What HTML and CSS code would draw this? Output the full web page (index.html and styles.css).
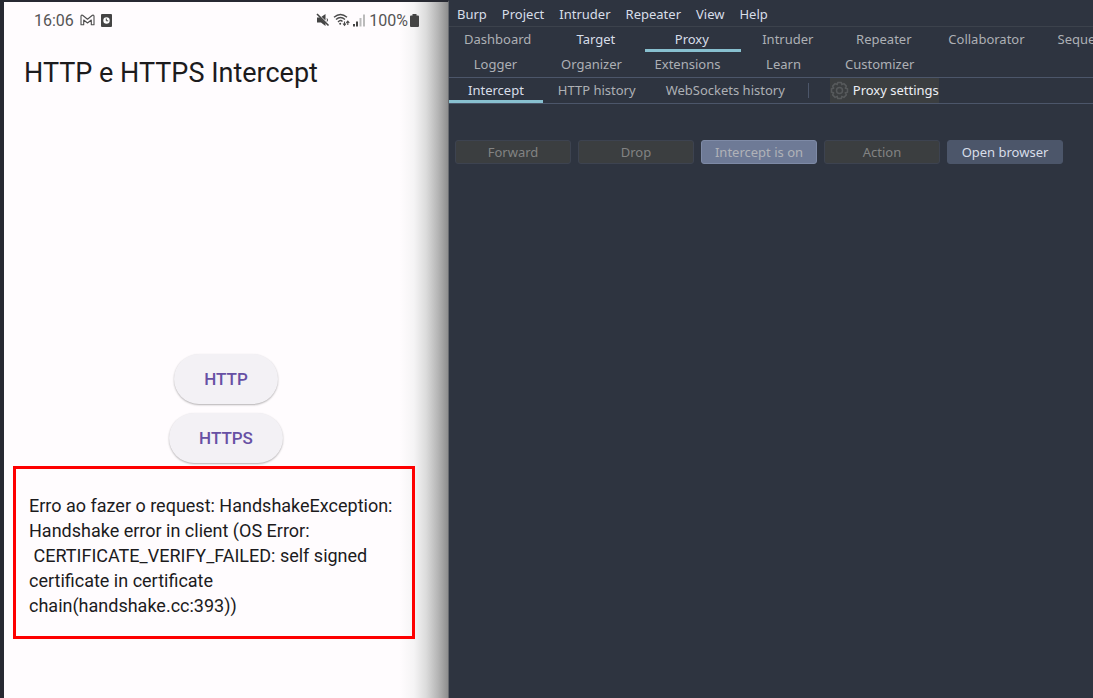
FILE: index.html
```html
<!DOCTYPE html>
<html lang="en">
<head>
<meta charset="utf-8">
<title>HTTP e HTTPS Intercept</title>
<link rel="stylesheet" href="styles.css">
</head>
<body>
<div class="desktop">
  <main class="phone" lang="pt">
    <div class="status">
      <div class="status-group">
        <span>16:06</span>
        <svg class="mail" width="15" height="12" viewBox="0 0 15 12" fill="none" stroke="#4c4c4c" stroke-width="1.100" stroke-linejoin="round"><path d="M1 10.800V2Q1.200.8 2.600 1.300L7.500 5.200 12.400 1.300Q13.800.8 14 2V10.800H11.300V6L7.500 9 3.700 6V10.800Z"/></svg>
        <svg class="clock" width="11" height="13" viewBox="0 0 11 13"><rect width="11" height="13" rx="1" fill="#444"/><circle cx="5.500" cy="6.500" r="3.200" fill="#fff"/><path d="M5.300 4.500V6.800H7.200" fill="none" stroke="#444"/></svg>
      </div>
      <div class="status-group status-right">
        <svg width="14" height="14" viewBox="0 0 14 14"><path d="M1 4.500H4L9.500 10V13L5 9.500H1Z M5.500 3.700L9.500 1V7.500Z" fill="#444"/><path d="M1 1L12.500 12.500" stroke="#444" stroke-width="1.600"/><path d="M11 5.500Q12 7 11 8.500" stroke="#444" fill="none"/></svg>
        <svg class="wifi" width="17" height="14" viewBox="0 0 17 14" fill="none" stroke="#4c4c4c" stroke-width="1.400"><path d="M1 4.300Q7.500-1.500 14 4.300 M3 6.600Q7.500 2.500 12 6.600 M5 8.900Q7.500 6.500 9.500 8.500"/><circle cx="7.200" cy="10.700" r="1" fill="#444" stroke="none"/><path d="M11.500 8.500V12 M10 10.500L11.500 12.300 13 10.500 M14.800 12V8.300 M13.300 9.800L14.800 8 16.300 9.800" stroke-width="1.100"/></svg>
        <svg width="12" height="13" viewBox="0 0 12 13"><path d="M0 10H2V12.500H0Z M3 7.500H5V12.500H3Z" fill="#444"/><path d="M6.500 4H8.500V12.500H6.500Z M10 .5H12V12.500H10Z" fill="#bbb"/></svg>
        <span class="percent">100%</span>
        <svg width="9" height="13" viewBox="0 0 9 13"><path d="M2.500 0H6.500V1.500H8Q9 1.500 9 2.500V12Q9 13 8 13H1Q0 13 0 12V2.500Q0 1.500 1 1.500H2.500Z" fill="#444"/></svg>
      </div>
    </div>
    <h1 class="title">HTTP e HTTPS Intercept</h1>
    <div class="actions">
      <button class="pill" type="button">HTTP</button>
      <button class="pill" type="button">HTTPS</button>
    </div>
    <p class="error">Erro ao fazer o request: HandshakeException:<br>Handshake error in client (OS Error:<br>&nbsp;CERTIFICATE_VERIFY_FAILED: self signed<br>certificate in certificate<br>chain(handshake.cc:393))</p>
  </main>
  <section class="burp">
    <nav class="menu">
      <button type="button">Burp</button><button type="button">Project</button><button type="button">Intruder</button><button type="button">Repeater</button><button type="button">View</button><button type="button">Help</button>
    </nav>
    <nav class="tabs">
      <div class="tab-row">
        <button class="tab" type="button">Dashboard</button>
        <button class="tab bright" type="button">Target</button>
        <button class="tab active" type="button">Proxy</button>
        <button class="tab" type="button">Intruder</button>
        <button class="tab" type="button">Repeater</button>
        <button class="tab" type="button">Collaborator</button>
        <button class="tab" type="button">Seque</button>
      </div>
      <div class="tab-row second">
        <button class="tab" type="button">Logger</button>
        <button class="tab" type="button">Organizer</button>
        <button class="tab" type="button">Extensions</button>
        <button class="tab" type="button">Learn</button>
        <button class="tab" type="button">Customizer</button>
      </div>
    </nav>
    <nav class="subtabs">
      <button class="tab active" type="button">Intercept</button>
      <button class="tab" type="button">HTTP history</button>
      <button class="tab" type="button">WebSockets history</button>
      <span class="divider"></span>
      <button class="settings" type="button">
        <svg width="19" height="19" viewBox="0 0 19 19" fill="none" stroke="#56595b" stroke-width="1.500" stroke-linejoin="round"><path d="M7.700 1.500H11.300L11.800 3.700 13.900 2.600 16.400 5.100 15.300 7.200 17.500 7.700V11.300L15.300 11.800 16.400 13.900 13.900 16.400 11.800 15.300 11.300 17.500H7.700L7.200 15.300 5.100 16.400 2.600 13.900 3.700 11.800 1.500 11.300V7.700L3.700 7.200 2.600 5.100 5.100 2.600 7.200 3.700Z"/><circle cx="9.500" cy="9.500" r="3"/></svg>
        <span>Proxy settings</span>
      </button>
    </nav>
    <div class="toolbar">
      <button class="tool" type="button" disabled>Forward</button>
      <button class="tool" type="button" disabled>Drop</button>
      <button class="tool toggled" type="button">Intercept is on</button>
      <button class="tool" type="button" disabled>Action</button>
      <button class="tool primary" type="button">Open browser</button>
    </div>
  </section>
</div>
</body>
</html>
```
FILE: styles.css
```css
* { box-sizing: border-box; }
body { margin: 0; background: #2e3440; }
button { margin: 0; padding: 0; border: 0; background: none; color: inherit; font: inherit; white-space: nowrap; }
svg { display: block; flex: none; }

.desktop {
  display: grid;
  grid-template-columns: 449fr 644fr;
  min-height: 100vh;
  overflow: hidden;
}

.phone {
  min-width: 0;
  border-top: 2px solid #272932;
  border-left: 4px solid #272932;
  border-right: 1px solid #66696e;
  background: linear-gradient(to left, #8e8e8e 0, #b5b5b5 10px, #dcdcdc 22px, #f5f4f5 34px, #fffcfe 48px);
  color: #1c1b1d;
  font-family: Roboto, sans-serif;
}
.status {
  display: flex;
  justify-content: space-between;
  height: 36px;
  padding: 0 29px 0 30px;
  color: #555;
  font-size: 16px;
}
.status-group { display: flex; align-items: center; }
.mail { margin-left: 6px; }
.clock { margin-left: 6px; }
.wifi { margin: 0 3px; }
.percent { margin: 0 2px 0 4px; }
.title {
  margin: 15px 20px 0;
  font-size: 27px;
  font-weight: 400;
  line-height: 40px;
}
.actions {
  display: flex;
  flex-direction: column;
  align-items: center;
  gap: 9px;
  padding-top: 261px;
}
.pill {
  height: 50px;
  padding: 0 30px;
  border-radius: 25px;
  background: #f3f1f5;
  box-shadow: 0 1px 2px #0000004d;
  color: #6750a4;
  font-size: 17px;
  font-weight: 500;
}
.error {
  margin: 3px 33px 0 9px;
  padding: 24px 0 18px 13px;
  border: 3px solid #fe0000;
  font-size: 18px;
  line-height: 25px;
  white-space: nowrap;
}

.burp {
  min-width: 0;
  overflow: hidden;
  color: #adb0b5;
  font: 13px/18px "Noto Sans", sans-serif;
}
.menu {
  display: flex;
  gap: 15px;
  height: 27px;
  padding: 2px 8px 0;
  border-bottom: 1px solid #3c424c;
  color: #d8dee9;
}
.tabs { border-bottom: 1px solid #4c566a; }
.tab-row { display: flex; }
.tab-row .tab { min-width: 96px; padding: 0 18px 0 15px; }
.tab-row .tab:last-child { padding-right: 0; text-align: left; }
.second .tab, .second .tab:last-child { padding: 0 15px 0 12px; text-align: center; }
.tab {
  flex: none;
  height: 25px;
  border-top: 1px solid transparent;
  border-bottom: 3px solid transparent;
}
.bright { color: #d8dee9; }
.active { border-bottom-color: #88c0d0; color: #d8dee9; }
.subtabs {
  display: flex;
  align-items: center;
  height: 26px;
  border-bottom: 1px solid #4c566a;
}
.subtabs .tab { padding: 0 15px; }
.subtabs .active { padding: 0 19px; }
.divider { width: 1px; height: 15px; margin: 0 21px 0 8px; background: #4c566a; }
.settings {
  display: flex;
  align-items: center;
  gap: 4px;
  height: 25px;
  padding-bottom: 1px;
  background: #3b3e40;
  color: #eceff4;
}
.toolbar {
  display: flex;
  gap: 7px;
  padding: 36px 6px 0;
}
.tool {
  flex: none;
  width: 116px;
  height: 24px;
  border: 1px solid #3d4350;
  border-radius: 3px;
  background: #3b3e40;
  color: #828383;
}
.toggled { border-color: #7e8aa6; background: #6e7a96; color: #b0b2b8; }
.primary { border-color: #4c566a; background: #4c566a; color: #d8dee9; }
```
